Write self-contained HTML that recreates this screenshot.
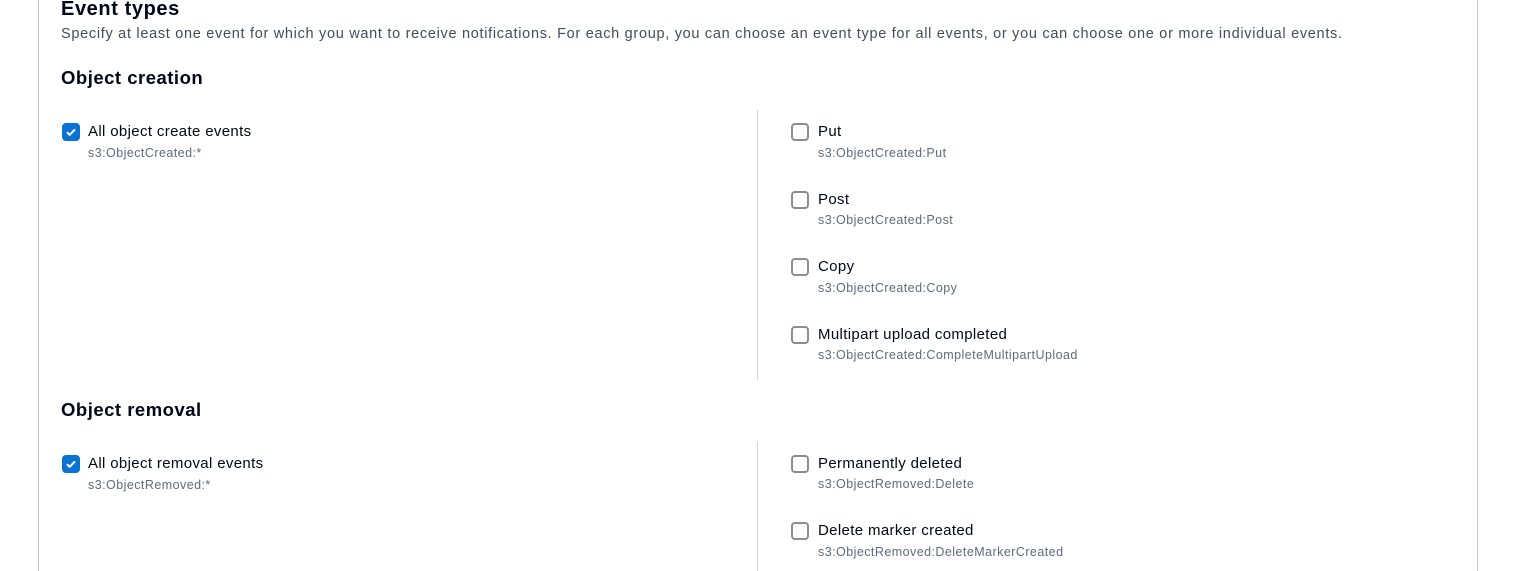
<!DOCTYPE html>
<html><head><meta charset="utf-8"><style>
body{margin:0;width:1515px;height:571px;overflow:hidden;background:#fff;font-family:"Liberation Sans",Arial,sans-serif;color:#000716;position:relative}
.bl{position:absolute;left:38px;top:0;width:1px;height:571px;background:#c6c6cd}
.br{position:absolute;left:1477px;top:0;width:1px;height:571px;background:#c6c6cd}
.vd{position:absolute;left:757px;width:1px;background:#d1d5db}
.t{position:absolute;white-space:nowrap}
.cb{position:absolute;width:14px;height:14px;border:2px solid #8c8c94;border-radius:4px;background:#fff}
.cb.on{background:#0972d3;border-color:#0972d3}
.lab{position:absolute;font-size:15px;letter-spacing:0.35px;white-space:nowrap;line-height:18px}
.sub{position:absolute;font-size:12.5px;letter-spacing:0.45px;color:#5f6b7a;white-space:nowrap;line-height:16px}
.h{font-size:18.5px;font-weight:bold;line-height:22px;letter-spacing:0.5px}
</style></head><body>
<div class="bl"></div><div class="br"></div>
<div class="vd" style="top:110px;height:270px"></div>
<div class="vd" style="top:442px;height:129px"></div>
<div class="t" style="left:61px;top:-4px;font-size:20px;font-weight:bold;line-height:26px;letter-spacing:0.6px">Event types</div>
<div class="t" style="left:61px;top:25px;font-size:14.5px;letter-spacing:0.7px;color:#414d5c;line-height:18px">Specify at least one event for which you want to receive notifications. For each group, you can choose an event type for all events, or you can choose one or more individual events.</div>
<div class="t h" style="left:61px;top:67px">Object creation</div>
<div class="t h" style="left:61px;top:399px">Object removal</div>

<div class="cb on" style="left:62px;top:123px"><svg width="14" height="14" viewBox="0 0 14 14"><path d="M3 7.2l2.6 2.6L11 4.4" stroke="#fff" stroke-width="2" fill="none"/></svg></div>
<div class="lab" style="left:88px;top:123px">All object create events</div>
<div class="sub" style="left:88px;top:145px">s3:ObjectCreated:*</div>

<div class="cb on" style="left:62px;top:455px"><svg width="14" height="14" viewBox="0 0 14 14"><path d="M3 7.2l2.6 2.6L11 4.4" stroke="#fff" stroke-width="2" fill="none"/></svg></div>
<div class="lab" style="left:88px;top:455px">All object removal events</div>
<div class="sub" style="left:88px;top:477px">s3:ObjectRemoved:*</div>

<div class="cb" style="left:791px;top:123px"></div><div class="lab" style="left:818px;top:123px">Put</div><div class="sub" style="left:818px;top:145px">s3:ObjectCreated:Put</div>
<div class="cb" style="left:791px;top:191px"></div><div class="lab" style="left:818px;top:191px">Post</div><div class="sub" style="left:818px;top:212px">s3:ObjectCreated:Post</div>
<div class="cb" style="left:791px;top:258px"></div><div class="lab" style="left:818px;top:258px">Copy</div><div class="sub" style="left:818px;top:280px">s3:ObjectCreated:Copy</div>
<div class="cb" style="left:791px;top:326px"></div><div class="lab" style="left:818px;top:326px">Multipart upload completed</div><div class="sub" style="left:818px;top:347px">s3:ObjectCreated:CompleteMultipartUpload</div>
<div class="cb" style="left:791px;top:455px"></div><div class="lab" style="left:818px;top:455px">Permanently deleted</div><div class="sub" style="left:818px;top:476px">s3:ObjectRemoved:Delete</div>
<div class="cb" style="left:791px;top:522px"></div><div class="lab" style="left:818px;top:522px">Delete marker created</div><div class="sub" style="left:818px;top:544px">s3:ObjectRemoved:DeleteMarkerCreated</div>
</body></html>
